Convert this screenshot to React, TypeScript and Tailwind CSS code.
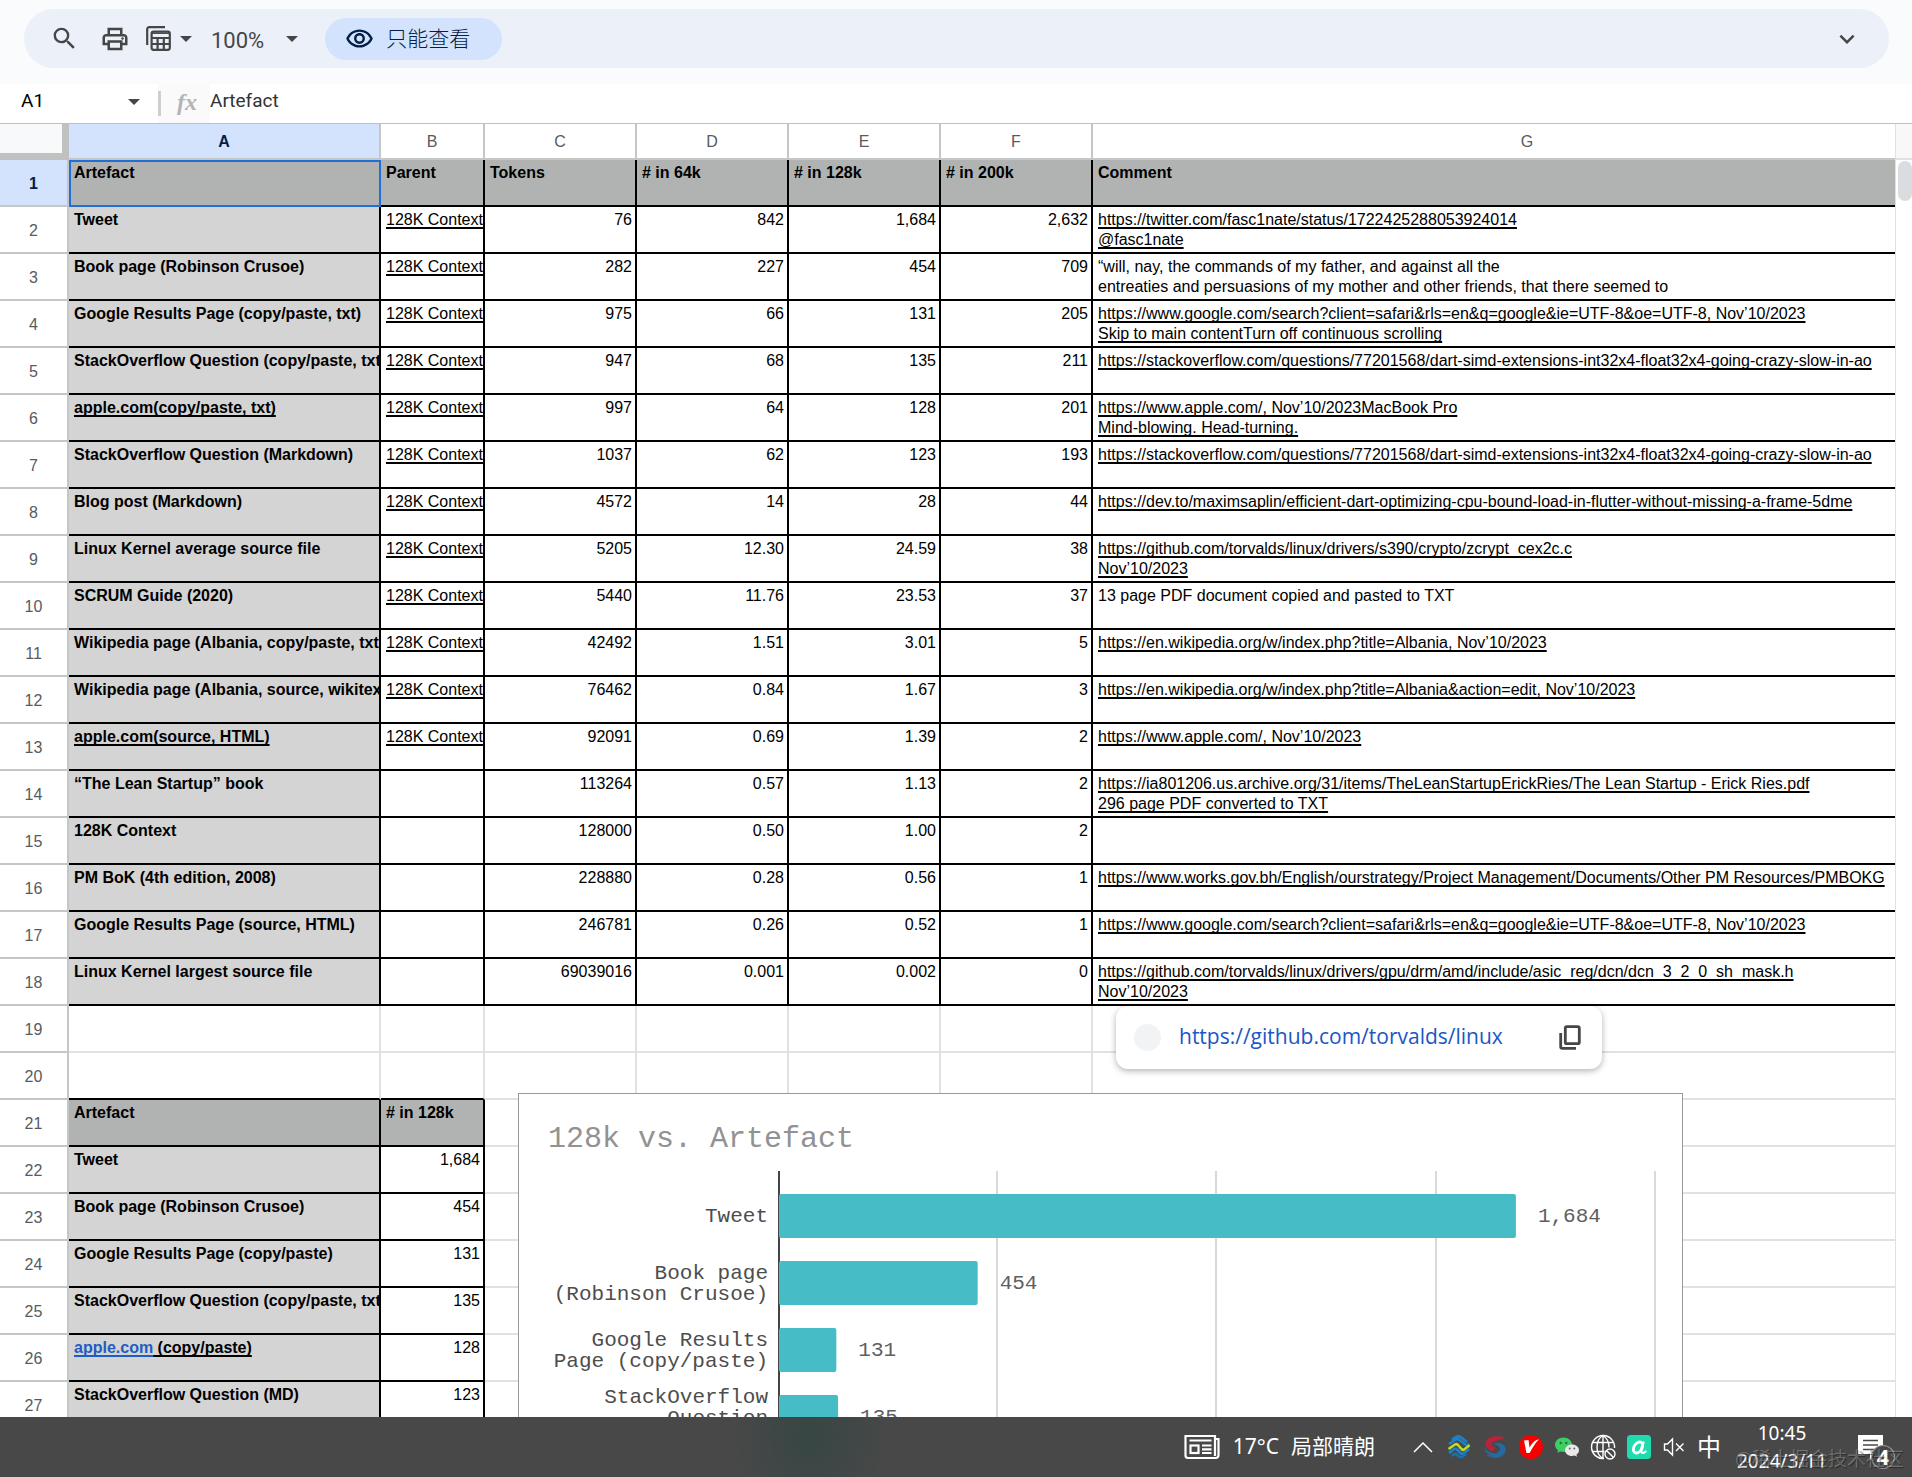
import { clsx } from "clsx";
import { MdKeyboardArrowDown, MdOutlinePrint, MdOutlineRemoveRedEye, MdSearch } from "react-icons/md";

interface ArtefactRow {
    name: string;
    href?: string;
    hasParent: boolean;
    values: [string, string, string, string];
    comment: string[];
    plain?: boolean;
}

const COLUMNS = ["A", "B", "C", "D", "E", "F", "G"];
const HEADINGS = ["Artefact", "Parent", "Tokens", "# in 64k", "# in 128k", "# in 200k", "Comment"];
const STACKOVERFLOW = "https://stackoverflow.com/questions/77201568/dart-simd-extensions-int32x4-float32x4-going-crazy-slow-in-ao";

const ROWS: ArtefactRow[] = [
    { name: "Tweet", hasParent: true, values: ["76", "842", "1,684", "2,632"], comment: ["https://twitter.com/fasc1nate/status/1722425288053924014", "@fasc1nate"] },
    { name: "Book page (Robinson Crusoe)", hasParent: true, values: ["282", "227", "454", "709"], comment: ["“will, nay, the commands of my father, and against all the", "entreaties and persuasions of my mother and other friends, that there seemed to"], plain: true },
    { name: "Google Results Page (copy/paste, txt)", hasParent: true, values: ["975", "66", "131", "205"], comment: ["https://www.google.com/search?client=safari&rls=en&q=google&ie=UTF-8&oe=UTF-8, Nov’10/2023", "Skip to main contentTurn off continuous scrolling"] },
    { name: "StackOverflow Question (copy/paste, txt)", hasParent: true, values: ["947", "68", "135", "211"], comment: [STACKOVERFLOW] },
    { name: "apple.com(copy/paste, txt)", href: "https://apple.com", hasParent: true, values: ["997", "64", "128", "201"], comment: ["https://www.apple.com/, Nov’10/2023MacBook Pro", "Mind-blowing. Head-turning."] },
    { name: "StackOverflow Question (Markdown)", hasParent: true, values: ["1037", "62", "123", "193"], comment: [STACKOVERFLOW] },
    { name: "Blog post (Markdown)", hasParent: true, values: ["4572", "14", "28", "44"], comment: ["https://dev.to/maximsaplin/efficient-dart-optimizing-cpu-bound-load-in-flutter-without-missing-a-frame-5dme"] },
    { name: "Linux Kernel average source file", hasParent: true, values: ["5205", "12.30", "24.59", "38"], comment: ["https://github.com/torvalds/linux/drivers/s390/crypto/zcrypt_cex2c.c", "Nov’10/2023"] },
    { name: "SCRUM Guide (2020)", hasParent: true, values: ["5440", "11.76", "23.53", "37"], comment: ["13 page PDF document copied and pasted to TXT"], plain: true },
    { name: "Wikipedia page (Albania, copy/paste, txt)", hasParent: true, values: ["42492", "1.51", "3.01", "5"], comment: ["https://en.wikipedia.org/w/index.php?title=Albania, Nov’10/2023"] },
    { name: "Wikipedia page (Albania, source, wikitext)", hasParent: true, values: ["76462", "0.84", "1.67", "3"], comment: ["https://en.wikipedia.org/w/index.php?title=Albania&action=edit, Nov’10/2023"] },
    { name: "apple.com(source, HTML)", href: "https://apple.com", hasParent: true, values: ["92091", "0.69", "1.39", "2"], comment: ["https://www.apple.com/, Nov’10/2023"] },
    { name: "“The Lean Startup” book", hasParent: false, values: ["113264", "0.57", "1.13", "2"], comment: ["https://ia801206.us.archive.org/31/items/TheLeanStartupErickRies/The Lean Startup - Erick Ries.pdf", "296 page PDF converted to TXT"] },
    { name: "128K Context", hasParent: false, values: ["128000", "0.50", "1.00", "2"], comment: [] },
    { name: "PM BoK (4th edition, 2008)", hasParent: false, values: ["228880", "0.28", "0.56", "1"], comment: ["https://www.works.gov.bh/English/ourstrategy/Project Management/Documents/Other PM Resources/PMBOKG"] },
    { name: "Google Results Page (source, HTML)", hasParent: false, values: ["246781", "0.26", "0.52", "1"], comment: ["https://www.google.com/search?client=safari&rls=en&q=google&ie=UTF-8&oe=UTF-8, Nov’10/2023"] },
    { name: "Linux Kernel largest source file", hasParent: false, values: ["69039016", "0.001", "0.002", "0"], comment: ["https://github.com/torvalds/linux/drivers/gpu/drm/amd/include/asic_reg/dcn/dcn_3_2_0_sh_mask.h", "Nov’10/2023"] },
];

const SUMMARY = [
    { name: "Tweet", value: "1,684" },
    { name: "Book page (Robinson Crusoe)", value: "454" },
    { name: "Google Results Page (copy/paste)", value: "131" },
    { name: "StackOverflow Question (copy/paste, txt)", value: "135" },
    { name: "apple.com", suffix: " (copy/paste)", value: "128" },
    { name: "StackOverflow Question (MD)", value: "123" },
];

const CHART_BARS = [
    { label: ["Tweet"], value: 1684 },
    { label: ["Book page", "(Robinson Crusoe)"], value: 454 },
    { label: ["Google Results", "Page (copy/paste)"], value: 131 },
    { label: ["StackOverflow", "Question", "(copy/paste)"], value: 135 },
];

const CELL = "overflow-hidden whitespace-nowrap border-r-2 border-b-2 pt-[3px] pr-[3px] pl-[5px] align-top";
const DARK = "border-black";
const LIGHT = "border-[#e1e1e1]";
const LINK = "underline decoration-2 underline-offset-2 [text-decoration-skip-ink:none]";

const DropArrow = () => (
    <svg viewBox="0 0 14 8" className="h-2 w-[14px] shrink-0" fill="currentColor">
        <path d="M1 1h12L7 7z" />
    </svg>
);

const Toolbar = () => (
    <div className="bg-[#f9fbfd] pt-[9px] pr-[23px] pb-4 pl-6">
        <div className="flex h-[59px] items-center rounded-full bg-[#ecf1f9] pr-[27px] pl-[26px] text-[#444746]">
            <button aria-label="Search">
                <MdSearch className="size-[29px]" />
            </button>
            <button aria-label="Print" className="ml-[21px]">
                <MdOutlinePrint className="size-[30px]" />
            </button>
            <button aria-label="Filter views" className="ml-[15px] flex items-center gap-[7px]">
                <svg viewBox="0 0 27 27" className="size-[27px]" fill="none" stroke="currentColor" strokeWidth="2.2">
                    <path d="M2.2 20V4.2a2 2 0 0 1 2-2H20" />
                    <rect x="6.6" y="6.6" width="18.2" height="18.2" rx="2" />
                    <path d="M6.6 13h18.2M6.6 19h18.2M12.6 13v12M18.8 13v12" />
                    <path d="M6.6 8.2h18.2" strokeWidth="1.5" />
                </svg>
                <DropArrow />
            </button>
            <button aria-label="Zoom" className="ml-[18px] flex items-center gap-[21px] text-[22px] leading-7">
                <span className="pt-1">100%</span>
                <DropArrow />
            </button>
            <button className="ml-[26px] flex h-[42px] items-center gap-3 rounded-full bg-[#d3e3fd] pr-8 pl-5 text-[#041e49]">
                <MdOutlineRemoveRedEye className="size-[29px]" />
                <span className="pb-1 font-['Noto_Sans_CJK_SC',sans-serif] text-[21px] leading-7 font-light">只能查看</span>
            </button>
            <button aria-label="Collapse" className="ml-auto">
                <MdKeyboardArrowDown className="size-[30px]" />
            </button>
        </div>
    </div>
);

const FormulaBar = () => (
    <div className="flex h-10 items-center border-b border-[#c0c0c0] bg-white text-[19px]">
        <input aria-label="Name box" defaultValue="A1" className="ml-[21px] w-[106px] pb-[5px] text-black outline-none" />
        <button aria-label="Named ranges" className="mr-[17px] pb-1 text-[#444746]">
            <DropArrow />
        </button>
        <label htmlFor="formula" className="flex h-full w-[52px] items-center bg-[#fafafa]">
            <span className="mr-4 h-[25px] w-[3px] bg-[#cfcfcf]" />
            <span className="pb-1 font-['Liberation_Serif',serif] text-2xl font-bold text-[#b4b4b4] italic">fx</span>
        </label>
        <input id="formula" defaultValue="Artefact" className="min-w-0 flex-1 pb-[5px] text-[#333] outline-none" />
    </div>
);

const RowHead = ({ row, selected }: { row: number; selected?: boolean }) => (
    <th
        scope="row"
        className={clsx(
            "border-r-2 border-b-2 border-[#c4c7c5] pt-[2px] text-center align-middle",
            selected ? "bg-[#d3e3fd] font-bold text-[#041e49]" : "font-normal text-[#575b5f]"
        )}
    >
        {row}
    </th>
);

const EmptyCells = ({ count }: { count: number }) => (
    <>
        {Array.from({ length: count }, (_, i) => (
            <td key={i} className={clsx(CELL, LIGHT)} />
        ))}
    </>
);

// Column G runs on under the scrollbar, so the table is wider than its pane
const Sheet = () => (
    <table className="w-[calc(100%+68px)] table-fixed border-separate border-spacing-0 font-['Liberation_Sans',Arial,sans-serif] text-base leading-5 text-black">
        <colgroup>
            <col className="w-[69px]" />
            <col className="w-[312px]" />
            <col className="w-[104px]" />
            <col className="w-[152px]" />
            <col className="w-[152px]" />
            <col className="w-[152px]" />
            <col className="w-[152px]" />
            <col />
        </colgroup>
        <thead>
            <tr className="h-9">
                <td className="border-r-[7px] border-b-[7px] border-[#c0c2c1] bg-[#f8f9fa]" />
                {COLUMNS.map((col) => (
                    <th
                        key={col}
                        scope="col"
                        className={clsx(
                            "border-r-2 border-b-2 border-[#c4c7c5] pt-[2px] align-middle",
                            col === "A" ? "bg-[#d3e3fd] font-bold text-[#041e49]" : "font-normal text-[#575b5f]"
                        )}
                    >
                        {col}
                    </th>
                ))}
            </tr>
        </thead>
        <tbody>
            <tr className="h-[47px] bg-[#b0b3b2] font-bold">
                <RowHead row={1} selected />
                {HEADINGS.map((heading, i) => (
                    <td
                        key={heading}
                        className={
                            i === 0
                                ? "border-2 border-[#1f6fd6] pt-px pl-[3px] align-top"
                                : clsx(CELL, DARK)
                        }
                    >
                        {heading}
                    </td>
                ))}
            </tr>
            {ROWS.map((row, i) => (
                <tr key={row.name} className="h-[47px]">
                    <RowHead row={i + 2} />
                    <td className={clsx(CELL, DARK, "bg-[#d4d4d4] font-bold")}>
                        {row.href ? <a href={row.href} className={LINK}>{row.name}</a> : row.name}
                    </td>
                    <td className={clsx(CELL, DARK)}>
                        {row.hasParent && <a href="#context" className={LINK}>128K Context</a>}
                    </td>
                    {row.values.map((value, j) => (
                        <td key={j} className={clsx(CELL, DARK, "text-right")}>{value}</td>
                    ))}
                    <td className={clsx(CELL, DARK)}>
                        {row.comment.map((line) => (
                            <div key={line}>
                                {row.plain ? line : <a href={row.comment[0]} className={LINK}>{line}</a>}
                            </div>
                        ))}
                    </td>
                </tr>
            ))}
            <tr className="h-[47px]">
                <RowHead row={19} />
                <EmptyCells count={7} />
            </tr>
            <tr className="h-[47px]">
                <RowHead row={20} />
                <td className={clsx(CELL, "border-r-[#e1e1e1] border-b-black")} />
                <td className={clsx(CELL, "border-r-[#e1e1e1] border-b-black")} />
                <EmptyCells count={5} />
            </tr>
            <tr className="h-[47px]">
                <RowHead row={21} />
                <td className={clsx(CELL, DARK, "bg-[#b0b3b2] font-bold")}>Artefact</td>
                <td className={clsx(CELL, DARK, "bg-[#b0b3b2] font-bold")}># in 128k</td>
                <EmptyCells count={5} />
            </tr>
            {SUMMARY.map((item, i) => (
                <tr key={item.name} className="h-[47px]">
                    <RowHead row={i + 22} />
                    <td className={clsx(CELL, DARK, "bg-[#d4d4d4] font-bold")}>
                        {item.suffix ? (
                            <>
                                <a href="https://apple.com" className={clsx(LINK, "text-[#1f5cc4]")}>{item.name}</a>
                                <span className={LINK}>{item.suffix}</span>
                            </>
                        ) : (
                            item.name
                        )}
                    </td>
                    <td className={clsx(CELL, DARK, "text-right")}>{item.value}</td>
                    <EmptyCells count={5} />
                </tr>
            ))}
        </tbody>
    </table>
);

const LinkPreview = () => (
    <div className="absolute top-[882px] left-[1116px] flex h-[63px] w-[486px] items-center rounded-xl bg-white pr-[21px] pl-[18px] shadow-[0_2px_6px_rgba(60,64,67,0.4)]">
        <span className="size-[27px] rounded-full bg-[#f1f3f4]" />
        <a href="https://github.com/torvalds/linux" className="ml-[18px] pb-[2px] font-['Open_Sans',sans-serif] text-[21px] font-medium text-[#1a56c4]">
            https://github.com/torvalds/linux
        </a>
        <button aria-label="Copy link" className="ml-auto text-[#444746]">
            <svg viewBox="0 0 22 25" className="h-[25px] w-[22px]" fill="none" stroke="currentColor" strokeWidth="2.8">
                <rect x="6.3" y="1.7" width="14" height="17" rx="1.5" />
                <path d="M1.7 8v13.800a1.500 1.500 0 0 0 1.500 1.500H17" />
            </svg>
        </button>
    </div>
);

const BAR_PITCH = 67;
const UNIT = 0.4376;

const Chart = () => (
    <svg
        className="absolute top-[969px] left-[518px] h-[700px] w-[1165px] border border-[#999] bg-white"
        fontFamily="'Liberation Mono', monospace"
        fontSize="21"
        role="img"
        aria-label="128k vs. Artefact"
    >
        <text x="29" y="53" fontSize="30" fill="#929292">128k vs. Artefact</text>
        {[478, 697, 917, 1136].map((x) => (
            <path key={x} d={`M${x} 77V700`} stroke="#d9d9d9" strokeWidth="2" />
        ))}
        <path d="M260 77V700" stroke="#444" strokeWidth="2" />
        {CHART_BARS.map((bar, i) => {
            const center = 122 + i * BAR_PITCH;
            const width = bar.value * UNIT;
            return (
                <g key={bar.label[0]}>
                    <rect x="260" y={center - 22} width={width} height="44" rx="2" fill="#46bdc6" />
                    {bar.label.map((line, j) => (
                        <text
                            key={line}
                            x="249"
                            y={center + 6 + j * 21 - (bar.label.length - 1) * 10}
                            textAnchor="end"
                            fill="#4d4d4d"
                        >
                            {line}
                        </text>
                    ))}
                    <text x={260 + width + 22} y={center + 6} fill="#606060">
                        {bar.value.toLocaleString("en-US")}
                    </text>
                </g>
            );
        })}
    </svg>
);

const TrayIcons = () => (
    <>
        <button aria-label="Show hidden icons" className="flex w-9 justify-center">
            <svg viewBox="0 0 20 12" className="h-3 w-5" fill="none" stroke="#fff" strokeWidth="1.5">
                <path d="M1 11l9-9 9 9" />
            </svg>
        </button>
        <button aria-label="Mobile client" className="flex w-9 justify-center">
            <svg viewBox="0 0 24 24" className="size-6" fill="none" strokeWidth="2.6" strokeLinejoin="round">
                <path d="M5 4.500l4-2.500q2.500-1.200 4.500 0l6.500 5" stroke="#1b82c9" />
                <path d="M2 9l6.500-4.500q2-1 4 .5l6 4.500q2 1.200 4-.5" stroke="#1b82c9" />
                <path d="M1.500 14L8 9.500q1.500-1 3 .5l3.500 4q1.500 1.500 3 .2l5-4" stroke="#c3d82c" />
                <path d="M2 18l5-4q1.500-1 3 .5l3.500 3.500q1.500 1.500 3.500 0l5-4" stroke="#1b82c9" />
                <path d="M5 21l2-1.700q1.500-1 3 .5l1.500 1.500q2 1.500 4 .2l3.500-2.500" stroke="#1b6fb3" />
            </svg>
        </button>
        <button aria-label="Security client" className="flex w-9 justify-center">
            <svg viewBox="0 0 24 24" className="size-6" fill="none">
                <path d="M22 2.500C15 .5 5 .5 3 6.500c-2 5 2 8.500 7 10l2.500-4C9 11.500 8 9.800 9.300 8 11 5.500 16 6 22 2.500z" fill="#b5243a" />
                <path d="M3 20c6 3.500 14 4.500 18-1 3.500-5 1-9-3-10.500-3-1-6 0-7.500 1 4 .5 7 2 6.500 5C16.500 18 10 19.500 3 20z" fill="#27699f" />
                <path d="M1.500 12c0 5 3 8 8 8 2 0 4-.5 5-1.500C9 18.500 4 17 1.500 12z" fill="#27699f" />
            </svg>
        </button>
        <button aria-label="Video client" className="flex w-9 justify-center">
            <svg viewBox="0 0 24 24" className="size-6">
                <circle cx="12" cy="12" r="12" fill="#f80000" />
                <path d="M5 5.500l4.500-.5 1 7.500C13 9 15 5 20 4.500c-3 2-6 8-9.500 13.500H7.500z" fill="#fff" />
            </svg>
        </button>
        <button aria-label="WeChat" className="flex w-9 justify-center">
            <svg viewBox="0 0 24 24" className="size-6">
                <path d="M8.500 2.500C3.800 2.500 0 5.600 0 9.800c0 2.200 1.200 4.200 3 5.500L2.300 18l3-1.600c1 .3 2 .5 3.200.5 4.700 0 8.500-3 8.500-7.100S13.200 2.500 8.500 2.500z" fill="#3fcb66" />
                <path d="M17 9.500c-4 0-7 2.500-7 5.700S13 21 17 21c.9 0 1.700-.1 2.500-.4l2.600 1.200-.7-2.300c1.600-1 2.600-2.500 2.600-4.300 0-3.200-3-5.700-7-5.700z" fill="#e9e9e9" />
                <g fill="#24723a">
                    <circle cx="5.700" cy="8" r="1.200" />
                    <circle cx="11.300" cy="8" r="1.200" />
                </g>
                <g fill="#666">
                    <circle cx="14.700" cy="13.500" r="1" />
                    <circle cx="19.300" cy="13.500" r="1" />
                </g>
            </svg>
        </button>
        <button aria-label="Network" className="flex w-9 justify-center">
            <svg viewBox="0 0 26 26" className="size-[26px]" fill="none" stroke="#fff" strokeWidth="1.4">
                <path d="M14 24.500A11.500 11.500 0 1 1 24.500 14" />
                <path d="M13 24.500C5 20 5 6 13 1.500 17 4 19 9 19 13.500M13 1.500v23M2.500 8.500h21M2.500 17.500h12" />
                <circle cx="20" cy="20" r="5" fill="#484848" />
                <path d="M16.500 16.500l7 7" />
            </svg>
        </button>
        <button aria-label="Input assistant" className="flex w-9 justify-center">
            <svg viewBox="0 0 24 24" className="size-6" fill="none" stroke="#fff" strokeLinecap="round">
                <rect width="24" height="24" rx="3.5" fill="#1fdcae" stroke="none" />
                <ellipse cx="11" cy="12.500" rx="4" ry="6" transform="rotate(32 11 12.500)" strokeWidth="2.8" />
                <path d="M16.500 7.500c-1.500 3.500-3 7.500-2 9.500.8 1.500 2.500 1 4-.5" strokeWidth="2.4" />
            </svg>
        </button>
        <button aria-label="Volume muted" className="flex w-[34px] justify-center">
            <svg viewBox="0 0 22 20" className="h-5 w-[22px]" fill="none" stroke="#fff" strokeWidth="1.4">
                <path d="M1.500 7v6h3l5 5V2l-5 5z" />
                <path d="M13 6.500l7.500 7.500M20.500 6.500L13 14" />
            </svg>
        </button>
        <button className="w-9 pb-[2px] text-center font-['Noto_Sans_CJK_SC',sans-serif] text-2xl leading-7">中</button>
    </>
);

const Taskbar = () => (
    <div className="relative flex h-[60px] shrink-0 items-center justify-end bg-[#484848] bg-[radial-gradient(ellipse_80px_90px_at_810px_20px,#374644,#484848)] font-['Noto_Sans','Noto_Sans_CJK_SC',sans-serif] text-white">
        <button className="mr-[30px] flex items-center gap-[13px] text-[21px] leading-7">
            <svg viewBox="0 0 36 26" className="h-[26px] w-9" fill="none" stroke="#fff" strokeWidth="2.2">
                <path d="M31 5V2H1.500v19.500c0 1.500 1 2.500 2.500 2.500h27.500c2 0 3-1 3-3V5H31v17" />
                <rect x="6.5" y="11.5" width="8" height="7.5" />
                <path d="M5.500 6.500h22M18 11.500h9.500M18 15.300h9.500M18 19h9.500" />
            </svg>
            <span className="flex gap-3 pb-[2px]">
                <span>17°C</span>
                <span>局部晴朗</span>
            </span>
        </button>
        <TrayIcons />
        <button className="flex w-[110px] flex-col items-center text-[19px] leading-7">
            <span>10:45</span>
            <span>2024/3/11</span>
        </button>
        <button aria-label="4 notifications" className="flex w-[75px] pl-[21px]">
            <svg viewBox="0 0 42 44" className="h-11 w-[42px]">
                <path d="M0 10h25v19H17l-5 6v-6H0z" fill="#fff" />
                <path d="M5 15.500h15M5 20h15M5 24.500h15" stroke="#484848" strokeWidth="1.3" />
                <circle cx="25" cy="32" r="11.5" fill="#484848" stroke="#999" strokeWidth="1.2" />
                <text x="25" y="40" textAnchor="middle" fontSize="22" fontWeight="700" fill="#fff">4</text>
            </svg>
        </button>
        <span className="pointer-events-none absolute right-2 bottom-1 text-[19px] leading-7 text-white/25 [text-shadow:1px_1px_1px_rgba(0,0,0,0.4)]">
            @稀土掘金技术社区
        </span>
    </div>
);

const App = () => (
    <div className="flex h-screen flex-col overflow-hidden bg-white font-[Roboto,sans-serif]">
        <Toolbar />
        <FormulaBar />
        <div className="relative flex min-h-0 flex-1 overflow-hidden">
            <div className="min-w-0 flex-1 overflow-hidden">
                <Sheet />
            </div>
            {/* Vertical scrollbar */}
            <div className="w-[17px] shrink-0 border-l border-[#e1e1e1]">
                <div className="h-9 border-b-2 border-[#e1e1e1] bg-[#f8f8f8]" />
                <div className="mt-px ml-[2px] h-10 rounded-full bg-[#dadce0]" />
            </div>
            <Chart />
            <LinkPreview />
        </div>
        <Taskbar />
    </div>
);

export default App;
